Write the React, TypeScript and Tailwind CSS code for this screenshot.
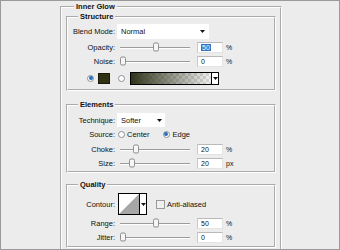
import React from "react";

const font = { fontFamily: '"Liberation Sans", Arial, sans-serif' };

function Arrow() {
  return (
    <svg width="5" height="3" viewBox="0 0 5 3" className="block">
      <path d="M0 0H5L2.5 3Z" fill="#111" />
    </svg>
  );
}

function Radio({ on }: { on?: boolean }) {
  return (
    <div className="w-[7px] h-[7px] rounded-full border border-[#8a8f96] bg-white flex items-center justify-center shrink-0">
      {on && <div className="w-[4px] h-[4px] rounded-full bg-[#2a6fc0]" />}
    </div>
  );
}

function Slider({ pos }: { pos: number }) {
  return (
    <div className="relative ml-[3px] w-[70px] h-full">
      <div className="absolute left-0 right-0 top-1/2 h-[2px] border-t border-[#9c9c9c] border-b border-b-white" />
      <div
        className="absolute top-1/2 -translate-y-1/2 w-[6px] h-[9px] rounded-[2px] border border-[#8d8d8d] bg-[#f6f6f6]"
        style={{ left: pos }}
      />
    </div>
  );
}

function NumInput({ v, sel }: { v: string; sel?: boolean }) {
  return (
    <div className="ml-[7px] w-[26px] h-[11px] bg-white border border-[#e4e4e4] border-t-[#b9b9b9] border-l-[#c9c9c9] flex items-center pl-[3px] text-[7px] leading-none">
      {sel ? <span className="bg-[#3276c9] text-white px-[1px]">{v}</span> : <span>{v}</span>}
    </div>
  );
}

function Label({ t }: { t: string }) {
  return <div className="w-[47px] shrink-0 text-right">{t}</div>;
}

function SliderRow({ label, pos, v, unit, sel, cls }: { label: string; pos: number; v: string; unit: string; sel?: boolean; cls?: string }) {
  return (
    <div className={"flex items-center h-[14px] " + (cls || "")}>
      <Label t={label} />
      <div className="w-[2px]" />
      <Slider pos={pos} />
      <NumInput v={v} sel={sel} />
      <div className="ml-[3px] text-[7px]">{unit}</div>
    </div>
  );
}

function Group({ title, children, cls }: { title: string; children: React.ReactNode; cls?: string }) {
  return (
    <fieldset className={"w-[210px] border-2 border-white [border-style:groove] " + (cls || "")}>
      <legend className="ml-[10px] px-[2px] font-bold text-[7.5px] leading-[9px]">{title}</legend>
      {children}
    </fieldset>
  );
}

export default function App() {
  return (
    <div
      className="w-[340px] h-[250px] overflow-hidden bg-[#ececec] border border-[#9a9a9a] text-[#111] text-[7.5px] leading-[9px]"
      style={font}
    >
      <fieldset className="ml-[59px] mt-[1px] w-[222px] h-[260px] border-2 border-white [border-style:groove] px-[4px]">
        <legend className="ml-[8px] px-[2px] font-bold text-[7.5px] leading-[9px]">Inner Glow</legend>
        <Group title="Structure" cls="mt-[1px]">
          <div className="pt-[3px] pb-[3px]">
            <div className="flex items-center h-[15px]">
              <Label t="Blend Mode:" />
              <div className="ml-[2px] w-[92px] h-[15px] bg-white flex items-center pl-[4px] pr-[4px] justify-between">
                <span>Normal</span>
                <Arrow />
              </div>
            </div>
            <SliderRow label="Opacity:" pos={33} v="50" unit="%" sel cls="mt-[1px]" />
            <SliderRow label="Noise:" pos={0} v="0" unit="%" />
            <div className="flex items-center h-[16px] mt-[2px] pl-[19px]">
              <Radio on />
              <div className="ml-[4px] w-[12px] h-[11px] bg-[#2f3112] border border-[#1a1a0a]" />
              <div className="ml-[8px]"><Radio /></div>
              <div className="ml-[5px] flex h-[13px] border border-black">
                <div className="w-[80px] h-full bg-[repeating-conic-gradient(#d8d8d8_0_25%,#f4f4f4_0_50%)] bg-[length:6px_6px]">
                  <div className="w-full h-full bg-gradient-to-r from-[#30331a] to-transparent" />
                </div>
                <div className="w-[7px] h-full bg-white border-l border-black flex items-center justify-center">
                  <Arrow />
                </div>
              </div>
            </div>
          </div>
        </Group>
        <Group title="Elements" cls="mt-[9px]">
          <div className="pt-[4px] pb-[1px]">
            <div className="flex items-center h-[14px]">
              <Label t="Technique:" />
              <div className="ml-[2px] w-[48px] h-[14px] bg-white flex items-center pl-[4px] pr-[3px] justify-between">
                <span>Softer</span>
                <Arrow />
              </div>
            </div>
            <div className="flex items-center h-[14px]">
              <Label t="Source:" />
              <div className="ml-[3px]"><Radio /></div>
              <span className="ml-[2px]">Center</span>
              <div className="ml-[13px]"><Radio on /></div>
              <span className="ml-[3px]">Edge</span>
            </div>
            <SliderRow label="Choke:" pos={13} v="20" unit="%" cls="mt-[1px]" />
            <SliderRow label="Size:" pos={9} v="20" unit="px" />
          </div>
        </Group>
        <Group title="Quality" cls="mt-[7px]">
          <div className="pt-[4px] pb-[2px]">
            <div className="flex items-center h-[22px]">
              <Label t="Contour:" />
              <div className="ml-[3px] flex h-[22px] border border-black bg-white">
                <svg width="20" height="20" viewBox="0 0 20 20" className="block">
                  <path d="M0 20L20 0V20Z" fill="#a6a6a6" />
                </svg>
                <div className="w-[7px] h-full border-l border-black flex items-center justify-center">
                  <Arrow />
                </div>
              </div>
              <div className="ml-[9px] w-[9px] h-[9px] border border-[#9a9a9a] bg-[#f0f0f0]" />
              <span className="ml-[2px]">Anti-aliased</span>
            </div>
            <SliderRow label="Range:" pos={33} v="50" unit="%" cls="mt-[1px]" />
            <SliderRow label="Jitter:" pos={0} v="0" unit="%" />
          </div>
        </Group>
      </fieldset>
    </div>
  );
}
